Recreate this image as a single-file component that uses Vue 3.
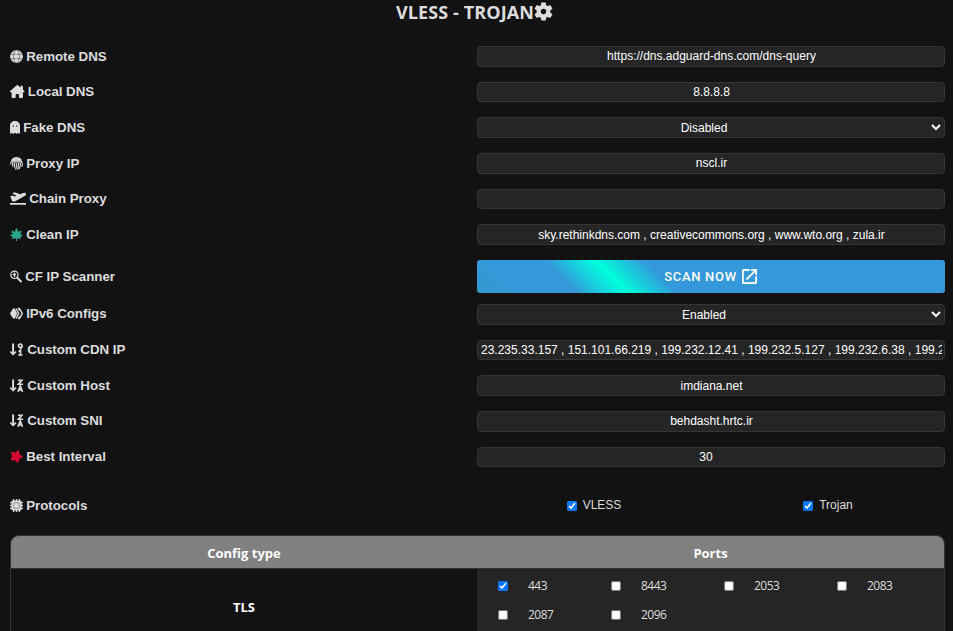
<script setup>
import { ref } from 'vue'

const icons = {
  globe: { box: '0 0 26 26', w: 13, body: '<circle cx="13" cy="13" r="12.800"/><g fill="none" stroke="#141414" stroke-opacity=".65" stroke-width="1.300"><path d="M1 8.600h24M1 17.400h24"/><ellipse cx="13" cy="13" rx="6" ry="13"/></g>' },
  house: { box: '0 0 576 512', w: 14.6, body: '<path d="M575.800 255.500c0 18-15 32.100-32 32.100h-32l.700 160.200c0 2.700-.200 5.400-.500 8.100V472c0 22.100-17.900 40-40 40H392c-22.100 0-40-17.900-40-40v-88c0-17.700-14.300-32-32-32h-64c-17.700 0-32 14.300-32 32v88c0 22.100-17.900 40-40 40h-80c-22.100 0-40-17.900-40-40V287.600H32c-18 0-32-14-32-32.100c0-9 3-17 10-24L266.400 8c7-7 15-8 22-8s15 2 21 7L416 100V64c0-17.700 14.300-32 32-32h32c17.700 0 32 14.300 32 32V185l52.800 46.400c8 7 12 15 11 24z"/>' },
  ghost: { box: '0 0 20 26', w: 10, body: '<path d="M0 10C0 4 4.500 0 10 0s10 4 10 10v14c0 1.500-1 2-2 1l-1.500-1.500L13.500 26 10 23.500 6.500 26l-3-2.500L2 25c-1 1-2 .500-2-1z"/><circle cx="6.500" cy="10" r="1.400" fill="#141414"/><circle cx="13.500" cy="10" r="1.400" fill="#141414"/>' },
  finger: { box: '0 0 26 26', w: 13, body: '<g fill="none" stroke="#ddd" stroke-width="2.300" stroke-linecap="round"><path d="M4 5.500C9-.300 17-.300 22 5.500M1.500 14C1 .800 25 .800 24.500 14c0 2 0 3-.500 5M5 18c.500-2 .300-3 .300-5C5.500 4 20.500 4 20.700 13c0 4-.300 7-1.700 10M8.500 20.500C9.300 17 9 15.500 9 13c.200-5 7.800-5 8 0 0 5-.500 8-1.500 11.500M13 13c0 4-.300 8-1.500 11.500"/></g>' },
  plane: { box: '0 0 32 26', w: 16, body: '<path d="M0 22h32v3.500H0zM.500 8.500L5 7l4 2 4-1.300L4.500 3 9 .700l11.500 4 4.500-2.200C28.200.900 31.300 1.200 32 3.300c.500 2.300-1.200 4.200-3.600 5.400L11.500 18c-2.500 1.300-5.500 1.500-7.200 0z"/>' },
  leaf: { box: '0 0 26 26', w: 13, color: '#2aa58c', body: '<path d="M13 0c2 2.500 3.200 5 3.300 8 2-1.600 4-2.500 6.700-2.800-.200 3-1.200 5.500-2.500 7.300 2.200.2 4 .800 5.500 2-1.700 1.800-3.500 3-5.500 3.500.8.800 1.300 1.800 1.500 3-3 .700-5.500.500-8-.500V26h-2v-5.500c-2.500 1-5 1.200-8 .500.200-1.200.700-2.200 1.500-3-2-.500-3.800-1.700-5.500-3.500 1.500-1.200 3.300-1.800 5.500-2C4.200 10.700 3.200 8.200 3 5.200c2.700.300 4.700 1.200 6.700 2.800.1-3 1.300-5.500 3.300-8z"/>' },
  search: { box: '0 0 24 26', w: 12, body: '<g fill="none" stroke="#ddd" stroke-width="2.400"><circle cx="8.800" cy="9.500" r="7.400"/><path d="M14.500 15.500l7.500 7.500" stroke-width="3.800" stroke-linecap="round"/></g><path d="M7.700 5h2.400v9H7.700zM5.300 7.500h7v3h-7z"/>' },
  hive: { box: '0 0 26 26', w: 13, body: '<path d="M6 3h3.500l5 10-5 10H6L0 13z"/><g fill="none" stroke="#ddd" stroke-width="3"><path d="M12 3l5.500 10L12 23M16.500 2l3 4.500M16.500 24l3-4.500M18.500 2l6 11-6 11"/></g>' },
  sortNum: { box: '0 0 28 26', w: 14, body: '<path d="M4.300 1h3.800v18l2.800-2.800 2.200 2.200L6.200 25-.700 18.400l2.200-2.200L4.300 19z"/><g fill="none" stroke="#ddd" stroke-width="3.400"><circle cx="20.500" cy="5.500" r="3.500"/><path d="M24 6c0 3-1 4.500-4 6M17 17l4-2v9M16.500 24h8.500"/></g>' },
  sortAz: { box: '0 0 28 26', w: 14, body: '<path d="M4.300 1h3.800v18l2.800-2.800 2.200 2.200L6.200 25-.700 18.400l2.200-2.200L4.300 19z"/><g fill="none" stroke="#ddd" stroke-width="3.400"><path d="M16 2.500h7.500L17 10.500h9M16 25.500L20.500 14 25 25.500M17 22h7"/></g>' },
  star: { box: '0 0 26 26', w: 13, color: '#d80830', body: '<path transform="translate(12.500 13) rotate(22)" stroke="#d80830" stroke-width="3" stroke-linejoin="round" d="M0-11.500 3.800-5.300 10.800-3.500 6.200 2 6.800 9.200 0 6.500-6.800 9.200-6.200 2-10.800-3.500-3.800-5.300z"/>' },
  chip: { box: '0 0 26 26', w: 13, body: '<path d="M6 0h2.500v3h3.200V0h2.600v3h3.200V0H20v3c2 0 3 1 3 3h3v2.500h-3v3.200h3v2.600h-3v3.200h3V20h-3c0 2-1 3-3 3v3h-2.500v-3h-3.200v3h-2.600v-3H8.500v3H6v-3c-2 0-3-1-3-3H0v-2.500h3v-3.200H0v-2.600h3V8.500H0V6h3c0-2 1-3 3-3z"/><path d="M7.500 7.500h11v11h-11z" fill="none" stroke="#777" stroke-width="1.400"/>' }
}

const rows = [
  { icon: 'globe', label: 'Remote DNS', kind: 'text', value: 'https://dns.adguard-dns.com/dns-query' },
  { icon: 'house', label: 'Local DNS', kind: 'text', value: '8.8.8.8' },
  { icon: 'ghost', label: 'Fake DNS', kind: 'select', value: 'Disabled' },
  { icon: 'finger', label: 'Proxy IP', kind: 'text', value: 'nscl.ir' },
  { icon: 'plane', label: 'Chain Proxy', kind: 'text', value: '' },
  { icon: 'leaf', label: 'Clean IP', kind: 'text', value: 'sky.rethinkdns.com , creativecommons.org , www.wto.org , zula.ir' },
  { icon: 'search', label: 'CF IP Scanner', kind: 'button', value: 'SCAN NOW' },
  { icon: 'hive', label: 'IPv6 Configs', kind: 'select', value: 'Enabled' },
  { icon: 'sortNum', label: 'Custom CDN IP', kind: 'text', value: '23.235.33.157 , 151.101.66.219 , 199.232.12.41 , 199.232.5.127 , 199.232.6.38 , 199.232.4.70' },
  { icon: 'sortAz', label: 'Custom Host', kind: 'text', value: 'imdiana.net' },
  { icon: 'sortAz', label: 'Custom SNI', kind: 'text', value: 'behdasht.hrtc.ir' },
  { icon: 'star', label: 'Best Interval', kind: 'number', value: '30' },
  { icon: 'chip', label: 'Protocols', kind: 'checks', value: '' }
]

const protocols = ref([
  { name: 'VLESS', on: true },
  { name: 'Trojan', on: true }
])
const ports = ref([
  { name: '443', on: true },
  { name: '8443', on: false },
  { name: '2053', on: false },
  { name: '2083', on: false },
  { name: '2087', on: false },
  { name: '2096', on: false }
])
</script>

<template>
  <main class="page">
    <h2 class="title">
      <span>VLESS - TROJAN</span>
      <svg class="gear" viewBox="2 2 20 20"><path d="M19.14 12.94c.04-.3.06-.61.06-.94 0-.32-.02-.64-.07-.94l2.03-1.58c.18-.14.23-.41.12-.61l-1.92-3.32c-.12-.22-.37-.29-.59-.22l-2.39.96c-.5-.38-1.03-.7-1.62-.94l-.36-2.54c-.04-.24-.24-.41-.48-.41h-3.84c-.24 0-.43.17-.47.41l-.36 2.54c-.59.24-1.13.57-1.62.94l-2.39-.96c-.22-.08-.47 0-.59.22L2.740 8.870c-.12.21-.08.47.12.61l2.03 1.58c-.05.3-.09.63-.09.94s.02.64.07.94l-2.03 1.58c-.18.14-.23.41-.12.61l1.92 3.32c.12.22.37.29.59.22l2.39-.96c.5.38 1.03.7 1.62.94l.36 2.54c.05.24.24.41.48.41h3.84c.24 0 .44-.17.47-.41l.36-2.54c.59-.24 1.13-.56 1.62-.94l2.39.96c.22.08.47 0 .59-.22l1.92-3.32c.12-.22.07-.47-.12-.61l-2.01-1.58zM12 14.800a2.800 2.800 0 1 1 0-5.600 2.800 2.800 0 0 1 0 5.600z" /></svg>
    </h2>

    <form class="form" @submit.prevent>
      <div v-for="row in rows" :key="row.label" class="row" :class="'row-' + row.kind">
        <label class="label">
          <svg class="icon" :viewBox="icons[row.icon].box" :width="icons[row.icon].w" height="13" :fill="icons[row.icon].color || '#dddddd'" v-html="icons[row.icon].body"></svg>
          <span>{{ row.label }}</span>
        </label>
        <select v-if="row.kind === 'select'" class="field"><option>{{ row.value }}</option></select>
        <button v-else-if="row.kind === 'button'" type="button" class="scan">
          <span>{{ row.value }}</span>
          <svg class="open" viewBox="3 3 18 18"><path d="M19 19H5V5h7V3H5a2 2 0 0 0-2 2v14a2 2 0 0 0 2 2h14c1.100 0 2-.900 2-2v-7h-2zM14 3v2h3.590l-9.830 9.830 1.410 1.410L19 6.410V10h2V3z" /></svg>
        </button>
        <div v-else-if="row.kind === 'checks'" class="protocols">
          <label v-for="p in protocols" :key="p.name" class="protocol">
            <input v-model="p.on" type="checkbox" class="check" />
            <span>{{ p.name }}</span>
          </label>
        </div>
        <input v-else :type="row.kind" class="field" :value="row.value" />
      </div>
    </form>

    <section class="table">
      <div class="head">Config type</div>
      <div class="head">Ports</div>
      <div class="type">TLS</div>
      <div class="ports">
        <label v-for="p in ports" :key="p.name" class="port">
          <input v-model="p.on" type="checkbox" class="check" />
          <span>{{ p.name }}</span>
        </label>
      </div>
    </section>
  </main>
</template>

<style>
html,
body {
  background: #121212;
  overflow: hidden;
}
</style>

<style scoped>
.page {
  box-sizing: border-box;
  height: 631px;
  overflow: hidden;
  padding: 0 8px 0 10px;
  background: #121212;
  color: #dddddd;
  font-family: "Liberation Sans", Arial, sans-serif;
}
.title {
  display: flex;
  justify-content: center;
  align-items: center;
  height: 24px;
  margin: 0 0 22px;
  padding-right: 6px;
  font: bold 18px/24px "Open Sans", sans-serif;
  letter-spacing: 0.12px;
}
.gear {
  width: 19px;
  height: 19px;
  margin-top: -2px;
  fill: #dddddd;
}
.row {
  display: grid;
  grid-template-columns: 467px 468px;
  align-items: center;
  height: 20.67px;
  margin-bottom: 15px;
}
.row-button {
  height: 33px;
  margin-bottom: 11px;
}
.row-checks {
  margin: 28px 0 19px;
}
.label {
  display: flex;
  align-items: center;
  gap: 3.2px;
  padding-bottom: 0.6px;
  font-size: 13.33px;
  font-weight: bold;
  letter-spacing: -0.03px;
  white-space: nowrap;
}
.icon {
  flex: none;
}
.field {
  box-sizing: border-box;
  width: 100%;
  height: 20.67px;
  margin: 0;
  padding: 0 2px 0 3px;
  border: 1px solid #353535;
  border-radius: 4px;
  background-color: #252525;
  color: #ffffff;
  font: 12px "Liberation Sans", Arial, sans-serif;
  text-align: center;
}
select.field {
  padding: 1px 3px 0 1px;
}
input[type="number"].field {
  padding: 0 0 0 5px;
}
.scan {
  display: flex;
  justify-content: center;
  align-items: center;
  gap: 5px;
  height: 33px;
  margin: 0;
  padding: 0 1px 0 0;
  border: 0;
  border-radius: 3px;
  background: linear-gradient(45deg, #3399cc 0%, #3498db 10%, #3498db 20%, #00ffdd 30%, #3498db 40%);
  color: #ffffff;
  font: 500 13px Roboto, sans-serif;
  letter-spacing: 0.7px;
}
.open {
  width: 15px;
  height: 15px;
  fill: #ffffff;
  stroke: #ffffff;
  stroke-width: 0.4;
}
.protocols {
  display: grid;
  grid-template-columns: 1fr 1fr;
  font-size: 12px;
}
.protocol {
  display: flex;
  justify-content: center;
  align-items: center;
  gap: 6px;
}
.protocol span {
  padding-bottom: 2px;
}
.check {
  flex: none;
  width: 10px;
  height: 10px;
  margin: 0;
}
.table {
  display: grid;
  grid-template-columns: 466px 467px;
  grid-template-rows: 32px 76px;
  row-gap: 1px;
  box-sizing: border-box;
  width: 935px;
  overflow: hidden;
  border: 1px solid #333333;
  border-radius: 9px 9px 0 0;
  background: #333333;
}
.head {
  background: #808080;
  color: #ffffff;
  font: bold 13px/34px "Open Sans", sans-serif;
  text-align: center;
}
.type {
  background: #121212;
  color: #ffffff;
  font: bold 13px/76px "Open Sans", sans-serif;
  text-align: center;
}
.ports {
  display: grid;
  grid-template-columns: repeat(4, 113px);
  grid-auto-rows: 29px;
  align-content: start;
  padding: 3px 0 0 21px;
  background: #252525;
}
.port {
  display: flex;
  align-items: center;
  gap: 20px;
  font: 12px/16px "Open Sans", sans-serif;
  letter-spacing: -0.5px;
}
.port span {
  padding-bottom: 1px;
}
</style>
